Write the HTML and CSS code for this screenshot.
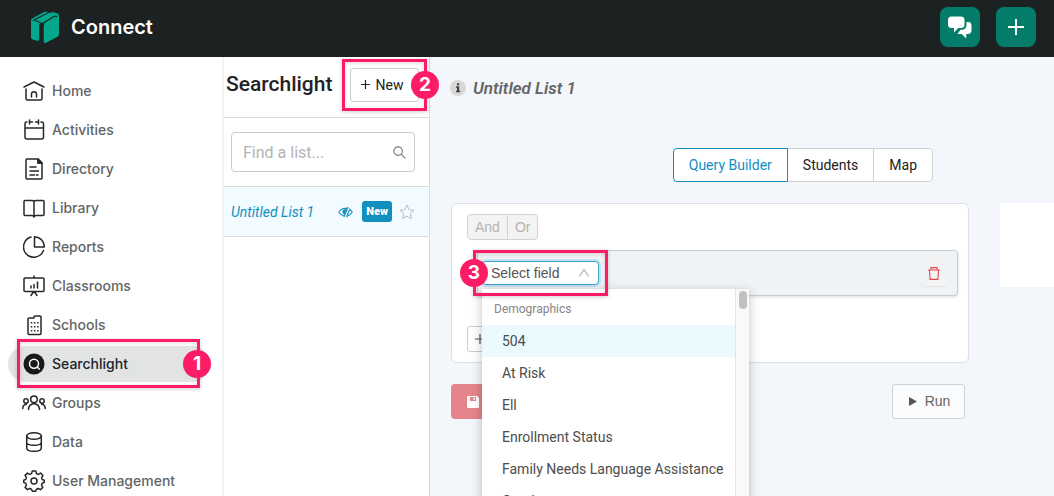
FILE: index.html
```
<!DOCTYPE html>
<html lang="en">
<head>
<meta charset="utf-8">
<meta name="viewport" content="width=device-width, initial-scale=1">
<title>Connect – Searchlight</title>
<link rel="stylesheet" href="styles.css">
</head>
<body>
<div class="app">
  <header class="topbar">
    <svg class="logo" viewBox="0 0 28 32" aria-hidden="true">
      <path fill="#04a78c" d="M0 9.500Q0 8 1.500 7.200L13 1Q14.500.4 16 .8L17 1.300 18.500 2 20.500 1.600Q22 1.200 23.500 1.500L26 2.300Q28 3 28 5V23.500Q28 25 26.500 25.800L15 31.700Q12.500 32.500 12.500 30V14.500Q12.500 13.500 13.500 13L9 12.500Q8.500 13 8.500 14V29.500Q6 30 3 29 0 28 0 26.500Z"/>
      <path fill="none" stroke="#1c2222" stroke-width="1.200" stroke-linejoin="round" d="M2 9.700 5 8 17.800 1.300M10.600 13 23 5.500Q25 4.700 26 6M8.800 11.200 4.500 9.800"/>
      <path fill="#1c2222" d="M8.500 13.500Q8.500 12 10 11.300L12 12.500 14 12.500Q12.500 13.300 12.500 14.500V32H8.500Z"/>
    </svg>
    <span class="brand">Connect</span>
    <button class="top-btn" type="button" aria-label="Messages">
      <svg width="24" height="23" viewBox="0 0 24 23" fill="#fff"><path d="M3.500.5h9.500a3.500 3.500 0 0 1 3.500 3.500v4.500a3.500 3.500 0 0 1-3.500 3.500h-2.800L6 16.500V12H3.500A3.500 3.500 0 0 1 0 8.500V4A3.500 3.500 0 0 1 3.500.5z"/><path d="M18.500 6H20a3.500 3.500 0 0 1 3.500 3.500V14a4 4 0 0 1-4 4h-1.200v4.500L13.500 18h-4l3-4.200h1a4.500 4.500 0 0 0 5-4.500z"/></svg>
    </button>
    <button class="top-btn" type="button" aria-label="Add">
      <svg width="16" height="16" viewBox="0 0 16 16" stroke="#fff" stroke-width="2"><path d="M8 0v16M0 8h16"/></svg>
    </button>
  </header>

  <div class="body">
    <nav class="sidebar" aria-label="Main">
      <a class="nav-item" href="#"><svg class="icon" viewBox="0 0 22 22"><path d="M1 7 11 2l10 5M3 9v9.500Q3 20 4.500 20h13q1.500 0 1.500-1.500V9M8.500 17v-3q0-2.300 2.500-2.300t2.500 2.300v3"/></svg>Home</a>
      <a class="nav-item" href="#"><svg class="icon" viewBox="0 0 22 22"><path d="M4 3H3.500Q2 3 2 5v13q0 2 2 2h14.500q2 0 2-2V5q0-2-2-2H18M7.500 3H9.500M12.500 3h2.500M2 9h18.500M6.500 1v4M15.500 1v4"/></svg>Activities</a>
      <a class="nav-item" href="#"><svg class="icon" viewBox="0 0 22 22"><path d="M3 2q0-1 1-1h11l4 4v15q0 1-1 1H4q-1 0-1-1zM15 1v4h4M7 9h6M7 13h8.500M7 17h4.500M13.500 17h1.500"/><path fill="#252829" d="m15 1 4 4h-4z"/></svg>Directory</a>
      <a class="nav-item" href="#"><svg class="icon" viewBox="0 0 22 22"><path d="M11 4.500Q10.500 3.500 9 3.500H2q-1 0-1 1v13q0 1 1 1h7q1.500 0 2 1.500.5-1.500 2-1.500h7q1 0 1-1v-13q0-1-1-1h-7q-1.500 0-2 1zV20"/></svg>Library</a>
      <a class="nav-item" href="#"><svg class="icon" viewBox="0 0 22 22"><path d="M8 1A10.300 10.300 0 1 0 20.500 14.500M11.500.8V11H21.300Q21 2 11.500.8z"/></svg>Reports</a>
      <a class="nav-item" href="#"><svg class="icon" viewBox="0 0 22 22"><path d="M11 1v2M2 3h18q1 0 1 1v11.500q0 1-1 1H2q-1 0-1-1V4q0-1 1-1zM8 20.500l2-3h2l2 3M8 13v-2M11 13V9.500M14.500 13V7"/></svg>Classrooms</a>
      <a class="nav-item" href="#"><svg class="icon" viewBox="0 0 22 22"><path d="M5 5q0-1 1-1h5V3q0-1 1-1h5q1 0 1 1v16.500q0 1-1 1H6q-1 0-1-1z"/><path stroke-linecap="butt" stroke-dasharray="1.500 2.500" stroke-width="1.500" d="M8.500 8v10M11.700 8v10M14.900 8v10"/></svg>Schools</a>
      <a class="nav-item active" href="#" aria-current="page"><svg class="icon" viewBox="0 0 22 22"><circle cx="11" cy="11" r="10.500" fill="#17191a" stroke="none"/><g stroke="#fff"><circle cx="11" cy="10.700" r="4.500"/><path d="m14.300 14 2 2"/></g></svg>Searchlight
        <span class="mark mark-nav" aria-hidden="true"></span><span class="step step-nav">1</span></a>
      <a class="nav-item" href="#"><svg class="icon wide" viewBox="0 0 24 22"><circle cx="12" cy="7.300" r="3.300"/><circle cx="4" cy="9" r="2.200"/><circle cx="20" cy="9" r="2.200"/><path d="M6.500 17.500q0-5 5.500-6 5.500 1 5.500 6M.8 16.500q0-4 3.500-4.300M23.200 16.500q0-4-3.500-4.300"/></svg>Groups</a>
      <a class="nav-item" href="#"><svg class="icon" viewBox="0 0 22 22"><ellipse cx="11" cy="5" rx="7.300" ry="3.300"/><path d="M3.700 5v12q0 3.300 7.300 3.300t7.300-3.300V5M3.700 11.500q.3 2.700 7.300 2.700t7.300-2.700"/></svg>Data</a>
      <a class="nav-item" href="#"><svg class="icon" viewBox="0 0 22 22"><circle cx="11" cy="11" r="3"/><path d="M9.300 1h3.400l.8 2.700 1.700.7 2.500-1.300 2.200 2.300-1.300 2.400.7 1.700 1.900.7v2.200l-2 .8-.7 1.900 1.300 2.300-2.300 2.300-2.300-1.200-1.800.8-.7 1.900H9.300l-.8-2-1.800-.7-2.300 1.200-2.300-2.300 1.300-2.300-.7-1.900-2-.8v-2.200l2-.7.7-1.800-1.300-2.300 2.300-2.300 2.300 1.300 1.800-.8z"/></svg>User Management</a>
    </nav>

    <section class="lists" aria-label="Lists">
      <div class="lists-head">
        <h1>Searchlight</h1>
        <div class="anchor">
          <button class="new-btn" type="button"><svg width="9" height="9" viewBox="0 0 9 9" stroke="#222" stroke-width="1.200"><path d="M4.500 0v9M0 4.500h9"/></svg>New</button>
          <span class="mark mark-new" aria-hidden="true"></span><span class="step step-new">2</span>
        </div>
      </div>
      <div class="search">
        <label class="search-box">
          <input type="text" placeholder="Find a list..." aria-label="Find a list">
          <svg width="13" height="13" viewBox="0 0 14 14" fill="none" stroke="#777" stroke-width="1.200"><circle cx="5.500" cy="5.500" r="4.600"/><path d="m8.800 8.800 4.600 4.600"/></svg>
        </label>
      </div>
      <div class="list-row">
        <a class="list-name" href="#">Untitled List 1</a>
        <svg width="15" height="12" viewBox="0 0 15 12" fill="none" stroke="#118fbf" stroke-width="1.100"><path d="M6 10Q3 9.500 .8 6.200 3.300 2.300 7.500 2.200q.8 0 1.500.2M11.800 3.500q1.500 1 2.400 2.700-2 3.300-5.200 4"/><path d="M10 1 6 11M12 2.500 8.500 11"/><path fill="#118fbf" d="M7.800 3.800Q4.700 3.500 5 6q.3 1.600 1.300 2z"/></svg>
        <span class="tag">New</span>
        <button class="star" type="button" aria-label="Favourite"><svg width="16" height="16" viewBox="0 0 16 16" fill="none" stroke="#bbb"><path d="m8 1.200 2.100 4.500 4.900.6-3.600 3.400.9 4.900L8 12.200l-4.300 2.400.9-4.900L1 6.300l4.900-.6z"/></svg></button>
      </div>
    </section>

    <main class="main">
      <div class="title">
        <svg width="16" height="16" viewBox="0 0 16 16"><circle cx="8" cy="8" r="8" fill="#d8d8d8"/><path fill="#444" d="M7 3.200h2.200v2H7zM6 6.300h3.200v4.500h1V12.300H6v-1.500h1V7.700H6z"/></svg>
        <h2>Untitled List 1</h2>
      </div>
      <div class="tabs">
        <button class="tab selected" type="button">Query Builder</button>
        <button class="tab" type="button">Students</button>
        <button class="tab" type="button">Map</button>
      </div>
      <div class="columns">
        <div class="builder">
          <div class="card">
            <div class="andor">
              <button type="button" disabled>And</button><button type="button" disabled>Or</button>
            </div>
            <div class="rule">
              <div class="field anchor">
                <select class="select" aria-label="Field">
                  <option>Select field</option>
                  <option>504</option><option>At Risk</option><option>Ell</option>
                  <option>Enrollment Status</option><option>Family Needs Language Assistance</option><option>Gender</option>
                </select>
                <svg class="chevron" width="10" height="8" viewBox="0 0 10 8" fill="none" stroke="#aaa" stroke-width="1.100"><path d="m.5 7.500 4.500-7 4.500 7"/></svg>
                <div class="menu">
                  <div class="options" role="listbox" aria-label="Fields">
                    <div class="group">Demographics</div>
                    <div class="option hover" role="option">504</div>
                    <div class="option" role="option">At Risk</div>
                    <div class="option" role="option">Ell</div>
                    <div class="option" role="option">Enrollment Status</div>
                    <div class="option" role="option">Family Needs Language Assistance</div>
                    <div class="option" role="option">Gender</div>
                  </div>
                  <div class="track"><div class="thumb"></div></div>
                </div>
                <span class="mark mark-field" aria-hidden="true"></span><span class="step step-field">3</span>
              </div>
              <button class="trash" type="button" aria-label="Delete rule"><svg width="12" height="13" viewBox="0 0 12 13" fill="none" stroke="#e2454c" stroke-width="1.100"><path d="M0 3h12M3 3V.6h6V3M1.500 3l.6 9.400h7.800l.6-9.400"/></svg></button>
            </div>
            <button class="add" type="button" aria-label="Add rule"><svg width="10" height="10" viewBox="0 0 10 10" stroke="#555" stroke-width="1.200"><path d="M5 0v10M0 5h10"/></svg></button>
          </div>
          <div class="actions">
            <button class="save" type="button" aria-label="Save"><svg width="12" height="12" viewBox="0 0 12 12"><path fill="#fff" d="M1 0h9l2 2v9q0 1-1 1H1q-1 0-1-1V1q0-1 1-1z"/><path fill="#e5858b" d="M3 1h6v4H3z"/><path fill="#fff" d="M6.500 1.500h1.300v2.500H6.500z"/></svg></button>
            <button class="run" type="button"><svg width="8" height="9" viewBox="0 0 8 9" fill="#555"><path d="M0 0 8 4.500 0 9z"/></svg>Run</button>
          </div>
        </div>
        <aside class="side"></aside>
      </div>
    </main>
  </div>
</div>
</body>
</html>
```
FILE: styles.css
```
* { box-sizing: border-box; }

body {
  margin: 0;
  font-family: Roboto, sans-serif;
  font-size: 14px;
  color: #222;
  background: #f3f6fa;
}

button, input, select { font: inherit; color: inherit; margin: 0; }
button { padding: 0; display: flex; align-items: center; justify-content: center; }
a { color: inherit; text-decoration: none; }
h1, h2 { margin: 0; font-weight: 500; white-space: nowrap; }
svg { flex: none; }

.app { display: flex; flex-direction: column; height: 100vh; overflow: hidden; }

.topbar {
  display: flex;
  align-items: center;
  gap: 16px;
  flex: none;
  height: 57px;
  padding: 0 18px 3px 31px;
  background: #1c2222;
}
.logo { width: 28px; height: 32px; margin-right: -4px; }
.brand {
  flex: 1;
  color: #fff;
  font: 600 20px/24px Inter, sans-serif;
}
.top-btn {
  width: 40px;
  height: 40px;
  border: 0;
  border-radius: 8px;
  background: #037d69;
}

.body { display: flex; flex: 1; min-height: 0; }

.sidebar {
  display: flex;
  flex-direction: column;
  gap: 3px;
  flex: none;
  width: 222px;
  padding: 16px 12px 0 8px;
  background: #fff;
  font: 500 14px/20px Inter, sans-serif;
  color: #626567;
}
.nav-item {
  position: relative;
  display: flex;
  align-items: center;
  gap: 7px;
  flex: none;
  height: 36px;
  padding-left: 15px;
  border-radius: 18px;
}
.nav-item.active { background: #e2e4e3; color: #20232d; }
.icon {
  width: 22px;
  height: 22px;
  fill: none;
  stroke: #252829;
  stroke-width: 1.5;
  stroke-linecap: round;
  stroke-linejoin: round;
}
.icon.wide { width: 24px; margin: 0 -1px; }

.anchor { position: relative; }
.mark {
  position: absolute;
  border: 3px solid #fc1c65;
  box-shadow: 0 1px 4px rgba(0, 0, 0, .2), inset 0 1px 4px rgba(0, 0, 0, .15);
  pointer-events: none;
}
.step {
  position: absolute;
  width: 28px;
  height: 28px;
  border-radius: 50%;
  background: #fc1c65;
  color: #fff;
  font: 700 19px/28px Inter, sans-serif;
  text-align: center;
}
.mark-nav { inset: -7px 10px -6px 9px; }
.step-nav { top: 4px; right: -1px; }
.mark-new { inset: -9px -8px; }
.step-new { top: 3px; right: -20px; }
.mark-field { inset: -11px -9px -11px -9px; }
.step-field { top: -2px; left: -22px; }

.lists {
  flex: none;
  width: 208px;
  border-left: 2px solid #f1f4f7;
  border-right: 1px solid #d9dcdf;
  background: #fff;
}
.lists-head {
  display: flex;
  align-items: center;
  justify-content: space-between;
  height: 61px;
  padding: 0 10px 5px 2px;
  border-bottom: 1px solid #d9dcdf;
}
.lists-head h1 { padding-bottom: 2px; font-size: 21px; line-height: 24px; }
.new-btn {
  gap: 6px;
  width: 69px;
  height: 34px;
  padding-right: 5px;
  border: 1px solid #ccc;
  border-radius: 3px;
  background: #fff;
}
.search { padding: 14px 14px 14px 7px; border-bottom: 1px solid #d9dcdf; }
.search-box {
  display: flex;
  align-items: center;
  height: 40px;
  padding: 0 8px 0 11px;
  border: 1px solid #ccc;
  border-radius: 4px;
}
.search-box input {
  flex: 1;
  min-width: 0;
  padding: 0;
  border: 0;
  outline: 0;
  background: none;
  font-size: 16px;
}
.search-box input::placeholder { color: #b3b3b3; }
.list-row {
  display: flex;
  align-items: center;
  height: 50px;
  padding: 0 14px 0 7px;
  border-bottom: 1px solid #d9dcdf;
  background: #f2fbff;
  color: #118fbf;
}
.list-name { flex: 1; font-style: italic; white-space: nowrap; }
.tag {
  margin: 0 7px 0 9px;
  padding: 0 4px;
  border-radius: 3px;
  background: #118fbf;
  color: #fff;
  font-size: 11px;
  font-weight: 900;
  line-height: 21px;
}
.star { border: 0; background: none; }

.main { flex: 1; min-width: 0; padding: 19px 0 0 21px; }
.title { display: flex; align-items: center; gap: 7px; height: 24px; margin-left: -1px; }
.title h2 { font-size: 17px; font-style: italic; font-weight: 600; color: #666; }

.tabs {
  display: flex;
  justify-content: flex-end;
  margin-top: 48px;
  padding-right: 121px;
}
.tab {
  height: 34px;
  padding: 0 15px;
  margin-left: -1px;
  border: 1px solid #d0d2d4;
  background: #fff;
}
.tab:last-child { border-radius: 0 4px 4px 0; }
.tab.selected {
  position: relative;
  border-color: #118fbf;
  border-radius: 4px 0 0 4px;
  color: #118fbf;
}

.columns { display: flex; align-items: flex-start; gap: 31px; margin-top: 21px; }
.builder { flex: 1; min-width: 0; }
.side { flex: none; width: 54px; height: 84px; background: #fff; }
.card {
  height: 160px;
  padding: 10px 10px 0 15px;
  border: 1px solid #dcdfe1;
  border-radius: 6px;
  background: #fff;
}
.andor { display: flex; font: 14px/24px "Liberation Sans", sans-serif; }
.andor button {
  height: 26px;
  padding: 0 7px;
  border: 1px solid #d2d2d2;
  background: #f3f3f3;
  color: #b3b3b3;
}
.andor button:first-child { border-radius: 4px 0 0 4px; }
.andor button:last-child { margin-left: -1px; border-radius: 0 4px 4px 0; }
.rule {
  display: flex;
  align-items: center;
  justify-content: space-between;
  height: 46px;
  margin: 10px 0 0 10px;
  padding: 0 10px 0 4px;
  border: 1px solid #c8cbd0;
  border-radius: 4px;
  background: #eff3f6;
  box-shadow: 0 1px 3px rgba(0, 0, 0, .15);
}
.field { width: 117px; height: 24px; }
.select {
  width: 100%;
  height: 24px;
  padding: 0 20px 0 8px;
  border: 1px solid #38a4cf;
  border-radius: 4px;
  outline: 0;
  appearance: none;
  background: #fff;
  box-shadow: 0 0 0 2px #c6e0ed;
  font: 14px "Liberation Sans", sans-serif;
  color: #555;
}
.chevron { position: absolute; top: 8px; right: 10px; pointer-events: none; }
.menu {
  position: absolute;
  top: 28px;
  left: 0;
  display: flex;
  background: #fff;
  box-shadow: 0 3px 10px rgba(0, 0, 0, .25);
  color: #4d4d4d;
}
.options { width: 253px; white-space: nowrap; }
.group { padding: 4px 12px 0; height: 36px; font-size: 12px; line-height: 32px; color: #858585; }
.option { padding: 0 20px; line-height: 32px; }
.option.hover { background: #eafaff; }
.track { width: 14px; padding: 2px 2px 0 3px; border-left: 1px solid #e5e5e5; background: #f9f9f9; }
.thumb { width: 8px; height: 18px; border-radius: 4px; background: #c1c1c1; }
.trash {
  width: 26px;
  height: 26px;
  border: 0;
  border-radius: 4px;
  background: #f4f3f3;
  box-shadow: 0 1px 1px #e2e4e6;
}
.add {
  width: 26px;
  height: 26px;
  margin-top: 30px;
  border: 1px solid #ccc;
  border-radius: 3px;
  background: #fff;
}
.actions { display: flex; justify-content: space-between; margin-top: 21px; padding-right: 4px; }
.save {
  width: 92px;
  height: 35px;
  padding-right: 48px;
  border: 0;
  border-radius: 4px;
  background: #e5858b;
}
.run {
  gap: 8px;
  width: 73px;
  height: 35px;
  padding: 0 0 1px 2px;
  border: 1px solid #d0d3d6;
  border-radius: 3px;
  background: #fbfcfd;
  font: 14px "Liberation Sans", sans-serif;
  color: #666;
}
```
